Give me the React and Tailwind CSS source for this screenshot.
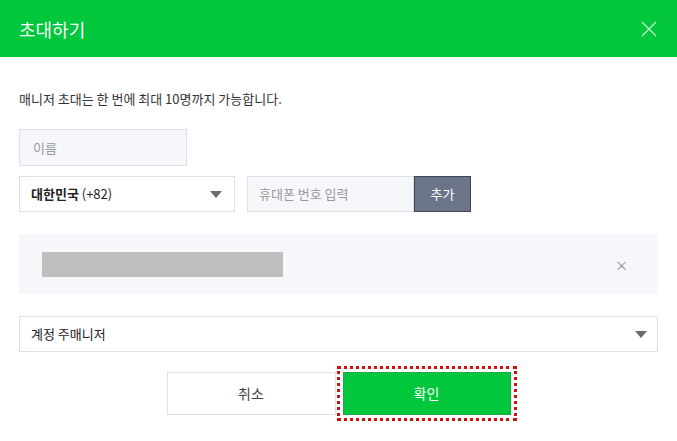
// App.jsx
import React from 'react';

const font = { fontFamily: '"Noto Sans CJK KR", "Noto Sans", sans-serif' };

function Caret() {
  return (
    <svg width="12" height="7" viewBox="0 0 12 7" className="shrink-0">
      <path d="M0 0 L12 0 L6 7 Z" fill="#6b6b6b" />
    </svg>
  );
}

export default function App() {
  return (
    <div className="w-[677px] h-[441px] bg-white overflow-hidden" style={font}>
      {/* Header */}
      <div className="h-[57px] bg-[#00c73c] flex items-center justify-between pl-[19px] pr-[20px]">
        <h1 className="text-white text-[18px] leading-none">초대하기</h1>
        <svg width="16" height="16" viewBox="0 0 16 16">
          <path d="M1 1 L15 15 M15 1 L1 15" stroke="#c8f5d4" strokeWidth="1.2" />
        </svg>
      </div>

      <div className="px-[19px]">
        <p className="mt-[33px] text-[13px] leading-[18px] text-[#333]">매니저 초대는 한 번에 최대 10명까지 가능합니다.</p>

        {/* Name */}
        <div className="mt-[21px] w-[168px] h-[37px] bg-[#f5f7fb] border border-[#dcdfe6] flex items-center px-[13px] text-[13px] text-[#999]">
          이름
        </div>

        {/* Phone row */}
        <div className="mt-[10px] flex items-center h-[36px]">
          <div className="w-[216px] h-full border border-[#dcdfe6] flex items-center justify-between pl-[11px] pr-[12px] text-[13px] text-[#222]">
            <span><b className="font-bold">대한민국</b> (+82)</span>
            <Caret />
          </div>
          <div className="ml-[12px] w-[167px] h-full bg-[#f5f7fb] border border-[#dcdfe6] flex items-center px-[11px] text-[13px] text-[#999]">
            휴대폰 번호 입력
          </div>
          <div className="w-[57px] h-full bg-[#6b7489] border border-[#3e4452] flex items-center justify-center text-[13px] text-white">
            추가
          </div>
        </div>

        {/* Added list */}
        <div className="mt-[22px] h-[60px] bg-[#f5f7fb] flex items-center justify-between pl-[23px] pr-[30px]">
          <div className="w-[241px] h-[25px] bg-[#bfbfbf]" />
          <span className="text-[13px] text-[#888] leading-none">×</span>
        </div>

        {/* Role select */}
        <div className="mt-[22px] h-[36px] border border-[#dcdfe6] flex items-center justify-between pl-[11px] pr-[10px] text-[13px] text-[#222]">
          <span>계정 주매니저</span>
          <Caret />
        </div>

        {/* Buttons */}
        <div className="mt-[20px] flex justify-center gap-[7px] -ml-[19px] w-[677px]">
          <button className="w-[169px] h-[43px] bg-white border border-[#dcdfe6] text-[14px] text-[#444]">
            취소
          </button>
          <button className="w-[168px] h-[43px] bg-[#00c73c] border border-[#17a84a] text-[14px] text-white outline-[3px] outline-dotted outline-[#d10f0f] outline-offset-[3px]">
            확인
          </button>
        </div>
      </div>
    </div>
  );
}
